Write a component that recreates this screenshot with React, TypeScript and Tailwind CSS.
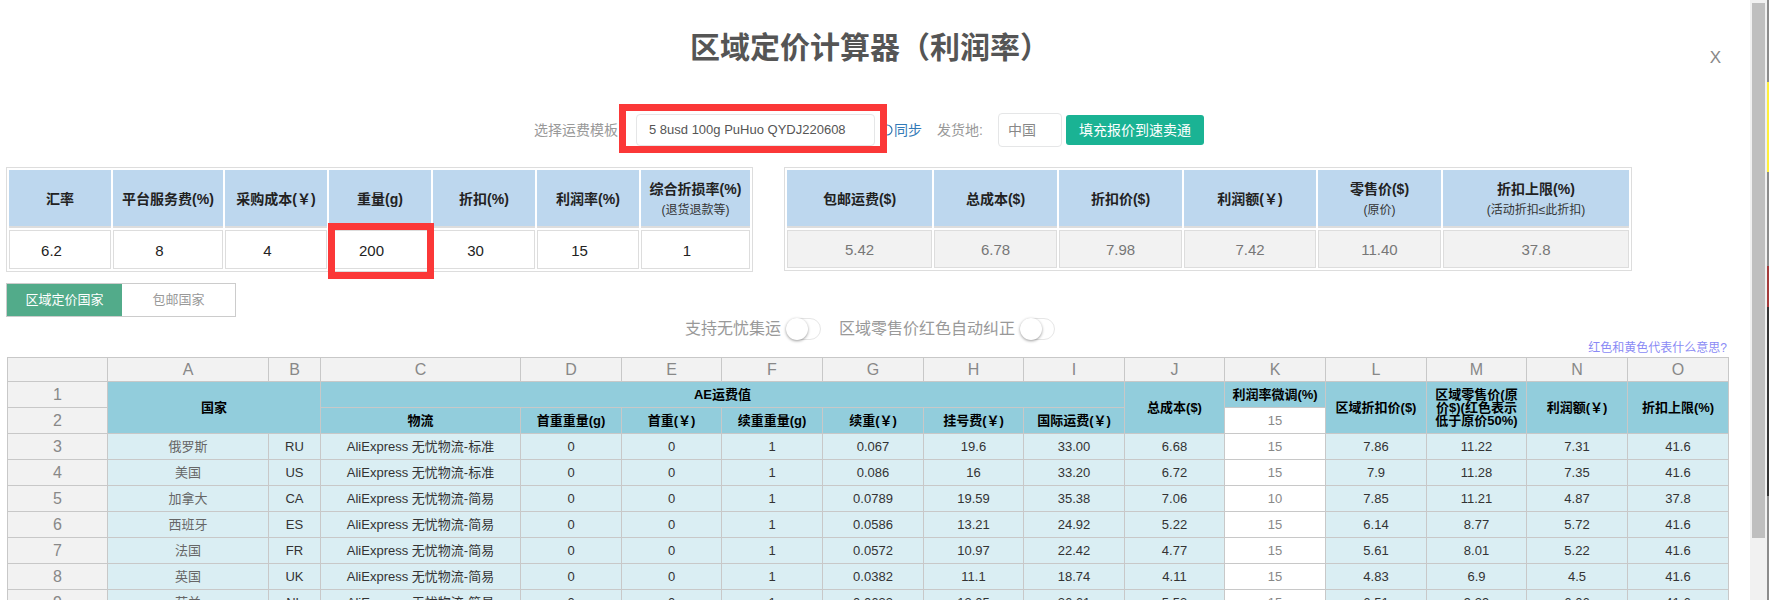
import React from 'react';

const inputCols = [
  { w: 'w-[102px]', title: '汇率', value: '6.2' },
  { w: 'w-[110px]', title: '平台服务费(%)', value: '8' },
  { w: 'w-[102px]', title: '采购成本(￥)', value: '4' },
  { w: 'w-[102px]', title: '重量(g)', value: '200', marked: true },
  { w: 'w-[102px]', title: '折扣(%)', value: '30' },
  { w: 'w-[102px]', title: '利润率(%)', value: '15' },
  { w: 'w-[109px]', title: '综合折损率(%)', sub: '(退货退款等)', value: '1' },
];

const resultCols = [
  { w: 'w-[145px]', title: '包邮运费($)', value: '5.42' },
  { w: 'w-[123px]', title: '总成本($)', value: '6.78' },
  { w: 'w-[123px]', title: '折扣价($)', value: '7.98' },
  { w: 'w-[132px]', title: '利润额(￥)', value: '7.42' },
  { w: 'w-[123px]', title: '零售价($)', sub: '(原价)', value: '11.40' },
  { w: 'w-[186px]', title: '折扣上限(%)', sub: '(活动折扣≤此折扣)', value: '37.8' },
];

const letters = ['A', 'B', 'C', 'D', 'E', 'F', 'G', 'H', 'I', 'J', 'K', 'L', 'M', 'N', 'O'];

const rows = [
  ['俄罗斯', 'RU', 'AliExpress 无忧物流-标准', '0', '0', '1', '0.067', '19.6', '33.00', '6.68', '15', '7.86', '11.22', '7.31', '41.6'],
  ['美国', 'US', 'AliExpress 无忧物流-标准', '0', '0', '1', '0.086', '16', '33.20', '6.72', '15', '7.9', '11.28', '7.35', '41.6'],
  ['加拿大', 'CA', 'AliExpress 无忧物流-简易', '0', '0', '1', '0.0789', '19.59', '35.38', '7.06', '10', '7.85', '11.21', '4.87', '37.8'],
  ['西班牙', 'ES', 'AliExpress 无忧物流-简易', '0', '0', '1', '0.0586', '13.21', '24.92', '5.22', '15', '6.14', '8.77', '5.72', '41.6'],
  ['法国', 'FR', 'AliExpress 无忧物流-简易', '0', '0', '1', '0.0572', '10.97', '22.42', '4.77', '15', '5.61', '8.01', '5.22', '41.6'],
  ['英国', 'UK', 'AliExpress 无忧物流-简易', '0', '0', '1', '0.0382', '11.1', '18.74', '4.11', '15', '4.83', '6.9', '4.5', '41.6'],
  ['荷兰', 'NL', 'AliExpress 无忧物流-简易', '0', '0', '1', '0.0633', '13.05', '26.61', '5.53', '15', '6.51', '9.29', '6.06', '41.6'],
];

const shipHeads = ['物流', '首重重量(g)', '首重(￥)', '续重重量(g)', '续重(￥)', '挂号费(￥)', '国际运费(￥)'];

const cell = 'border border-[#c8c8c8] p-0 text-center';
const teal = `${cell} bg-[#92cddc] font-bold text-black`;

function HeadText({ title, sub }: { title: string; sub?: string }) {
  return (
    <div className="pt-[2px]">
      <div className="text-[14px] font-bold leading-[20px] text-[#222]">{title}</div>
      {sub && <div className="mt-[2px] text-[12px] font-normal leading-[18px] text-[#333]">{sub}</div>}
    </div>
  );
}

function RedMark({ className }: { className: string }) {
  return <div className={`pointer-events-none absolute z-10 border-[7px] border-[#fb3838] ${className}`} />;
}

export default function App() {
  return (
    <div className="flex h-[600px] w-[1769px] overflow-hidden bg-white font-['Liberation_Sans','Noto_Sans_CJK_SC',sans-serif]">
      <div className="relative w-[1750px] shrink-0">
        {/* title */}
        <h1 className="w-[1740px] pt-[28px] text-center text-[30px] font-bold leading-[40px] text-[#555]">
          区域定价计算器（利润率）
        </h1>
        <button className="absolute right-[29px] top-[48px] text-[17px] leading-[20px] text-[#888]">X</button>

        {/* template row */}
        <div className="mt-[45px] flex h-[34px] items-center pl-[534px] text-[14px]">
          <span className="w-[102px] text-[#999]">选择运费模板</span>
          <div className="relative h-[32px] w-[239px] rounded-[4px] border border-[#e5e6e7] pl-[12px] text-[13px] leading-[30px] text-[#555]">
            5 8usd 100g PuHuo QYDJ220608
            <RedMark className="-bottom-[8px] -left-[18px] -right-[13px] -top-[11px]" />
          </div>
          <a className="ml-[6px] flex items-center text-[#337ab7]">
            <svg width="12" height="12" viewBox="0 0 12 12" fill="none" stroke="#337ab7" strokeWidth="1.2">
              <circle cx="6" cy="6" r="5" />
            </svg>
            <span className="w-[29px] pl-[1px]">同步</span>
          </a>
          <span className="ml-[15px] w-[61px] text-[#999]">发货地:</span>
          <div className="h-[34px] w-[64px] rounded-[4px] border border-[#e5e6e7] pl-[9px] leading-[32px] text-[#888]">中国</div>
          <button className="ml-[4px] h-[30px] w-[138px] rounded-[3px] bg-[#1ab394] text-center text-[14px] leading-[30px] text-white">
            填充报价到速卖通
          </button>
        </div>

        {/* input and result tables */}
        <div className="mt-[20px] flex items-start pl-[6px]">
          <table className="table-fixed border-separate border-spacing-[2px] border border-[#ddd] text-center">
            <tbody>
              <tr>
                {inputCols.map((c) => (
                  <th key={c.title} className={`${c.w} h-[58px] border-b-2 border-[#ddd] bg-[#bdd7ee] p-0 align-middle`}>
                    <HeadText title={c.title} sub={c.sub} />
                  </th>
                ))}
              </tr>
              <tr>
                {inputCols.map((c) => (
                  <td key={c.title} className="relative h-[39px] border border-[#ddd] p-0 pr-[17px] pt-[3px] text-[15px] text-[#222]">
                    {c.value}
                    {c.marked && <RedMark className="-bottom-[11px] -left-[2px] -right-[4px] -top-[8px]" />}
                  </td>
                ))}
              </tr>
            </tbody>
          </table>

          <table className="ml-[31px] table-fixed border-separate border-spacing-[2px] border border-[#ddd] text-center">
            <tbody>
              <tr>
                {resultCols.map((c) => (
                  <th key={c.title} className={`${c.w} h-[58px] border-b-2 border-[#ddd] bg-[#bdd7ee] p-0 align-middle`}>
                    <HeadText title={c.title} sub={c.sub} />
                  </th>
                ))}
              </tr>
              <tr>
                {resultCols.map((c) => (
                  <td key={c.title} className="h-[38px] border border-[#ddd] bg-[#f2f2f2] p-0 pt-[2px] text-[15px] text-[#777]">
                    {c.value}
                  </td>
                ))}
              </tr>
            </tbody>
          </table>
        </div>

        {/* tabs */}
        <div className="ml-[6px] mt-[11px] flex h-[34px] w-[230px] border border-[#ccc] text-center text-[13px] leading-[32px]">
          <div className="w-[115px] bg-[#52ab8a] text-white">区域定价国家</div>
          <div className="flex-1 text-[#999]">包邮国家</div>
        </div>

        {/* switches */}
        <div className="mt-[1px] flex h-[22px] w-[1740px] items-center justify-center text-[16px] text-[#999]">
          <span>支持无忧集运</span>
          <Toggle className="ml-[5px] mr-[18px]" />
          <span>区域零售价红色自动纠正</span>
          <Toggle className="ml-[5px]" />
        </div>

        <div className="w-[1727px] text-right text-[12px] leading-[17px] text-[#8a8af5]">红色和黄色代表什么意思?</div>

        {/* sheet */}
        <table className="ml-[7px] w-[1722px] table-fixed border-collapse border border-[#c8c8c8] text-[13px] leading-[13px] text-[#333]">
          <colgroup>
            <col className="w-[100px]" />
            <col className="w-[161px]" />
            <col className="w-[52px]" />
            <col className="w-[200px]" />
            <col className="w-[101px]" />
            <col className="w-[100px]" />
            <col className="w-[101px]" />
            <col className="w-[101px]" />
            <col className="w-[100px]" />
            <col className="w-[101px]" />
            <col className="w-[100px]" />
            <col className="w-[101px]" />
            <col className="w-[101px]" />
            <col className="w-[100px]" />
            <col className="w-[101px]" />
            <col className="w-[101px]" />
          </colgroup>
          <thead>
            <tr className="h-[24px] bg-[#f2f2f2] text-[16px] font-normal text-[#888]">
              <th className={`${cell} font-normal`} />
              {letters.map((l) => (
                <th key={l} className={`${cell} font-normal`}>{l}</th>
              ))}
            </tr>
          </thead>
          <tbody>
            <tr className="h-[26px]">
              <td className={`${cell} bg-[#f2f2f2] text-[16px] text-[#888]`}>1</td>
              <td colSpan={2} rowSpan={2} className={teal}>国家</td>
              <td colSpan={7} className={teal}>AE运费值</td>
              <td rowSpan={2} className={teal}>总成本($)</td>
              <td className={teal}>利润率微调(%)</td>
              <td rowSpan={2} className={teal}>区域折扣价($)</td>
              <td rowSpan={2} className={teal}>区域零售价(原<br />价$)(红色表示<br />低于原价50%)</td>
              <td rowSpan={2} className={teal}>利润额(￥)</td>
              <td rowSpan={2} className={teal}>折扣上限(%)</td>
            </tr>
            <tr className="h-[26px]">
              <td className={`${cell} bg-[#f2f2f2] text-[16px] text-[#888]`}>2</td>
              {shipHeads.map((h) => (
                <td key={h} className={teal}>{h}</td>
              ))}
              <td className={`${cell} bg-white text-[#888]`}>15</td>
            </tr>
            {rows.map((r, i) => (
              <tr key={r[1]} className="h-[26px]">
                <td className={`${cell} bg-[#f2f2f2] text-[16px] text-[#888]`}>{i + 3}</td>
                {r.map((v, j) => (
                  <td
                    key={j}
                    className={`${cell} ${j === 10 ? 'bg-white text-[#888]' : 'bg-[#daeef3]'} ${j === 0 ? 'text-[#666]' : ''}`}
                  >
                    {v}
                  </td>
                ))}
              </tr>
            ))}
          </tbody>
        </table>
      </div>

      {/* scrollbar */}
      <div className="w-[17px] shrink-0 bg-[#f1f1f1] pl-[2px] pt-[3px]">
        <div className="h-[535px] w-[13px] bg-[#bfbfbf]" />
      </div>

      {/* sliver of the page behind the dialog */}
      <div className="flex w-[2px] shrink-0 flex-col bg-[#8c8c8c]">
        <div className="mt-[82px] h-[90px] bg-[#fff03c]" />
        <div className="mt-[94px] h-[41px] bg-[#a33a3a]" />
        <div className="h-[189px] bg-[#333]" />
      </div>
    </div>
  );
}

function Toggle({ className }: { className: string }) {
  return (
    <div className={`h-[22px] w-[35px] rounded-full border border-[#e6e6e6] bg-white ${className}`}>
      <div className="-ml-px -mt-px h-[22px] w-[22px] rounded-full bg-white shadow-[0_1px_3px_rgba(0,0,0,0.4)]" />
    </div>
  );
}
